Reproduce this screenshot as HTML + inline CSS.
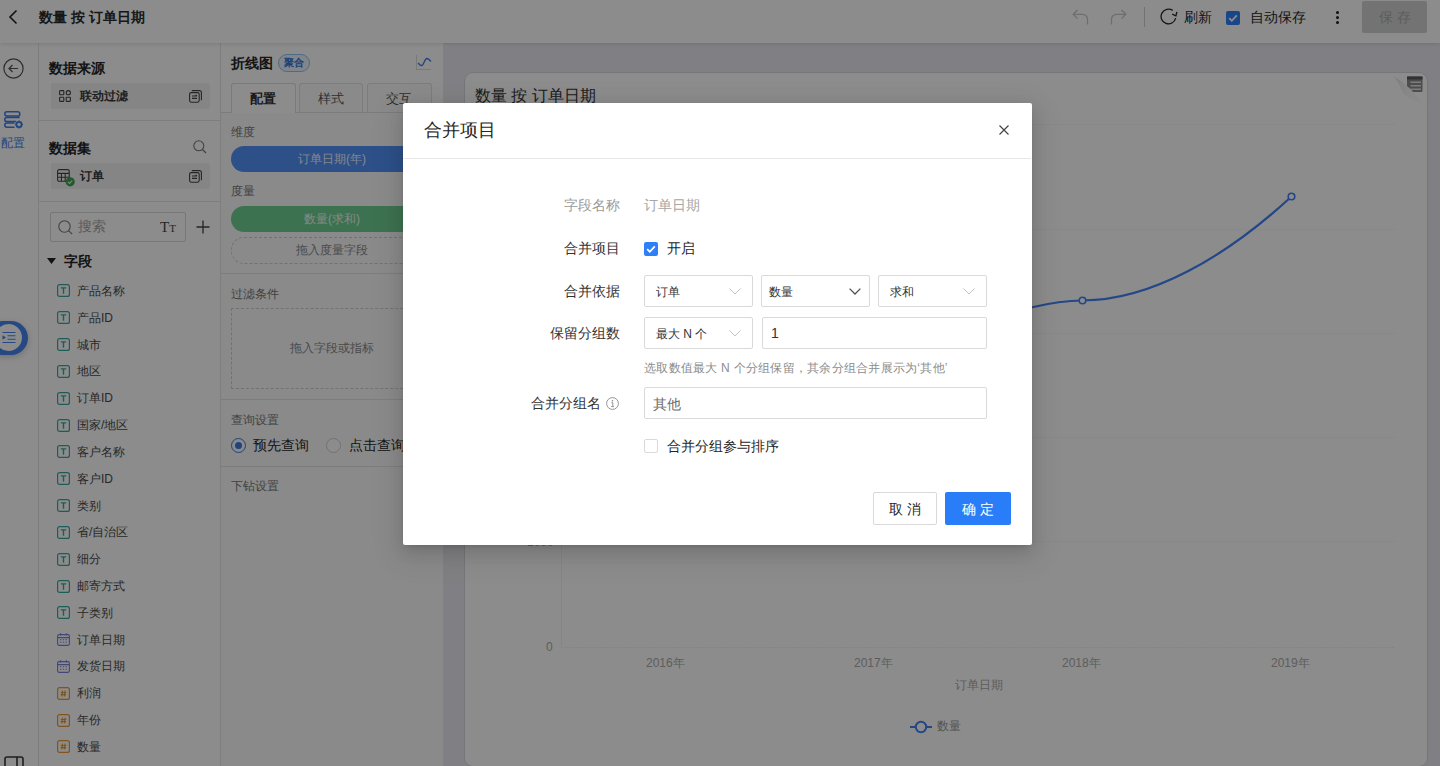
<!DOCTYPE html>
<html><head><meta charset="utf-8">
<style>
*{box-sizing:border-box;margin:0;padding:0}
html,body{width:1440px;height:766px;overflow:hidden;background:#fff;font-family:"Liberation Sans",sans-serif;color:#333}
.a{position:absolute}
.t{position:absolute;white-space:nowrap;line-height:1}
#hdr{left:0;top:0;width:1440px;height:43px;background:#fff;box-shadow:0 1px 4px rgba(0,0,0,.12);z-index:5}
#rail{left:0;top:42px;width:38px;height:724px;background:#fff}
#lp{left:38px;top:42px;width:182px;height:724px;background:#fff}
#mp{left:220px;top:42px;width:224px;height:724px;background:#fff;border-right:1px solid #e8e8e8}
#ca{left:443px;top:42px;width:997px;height:724px;background:#e9eaf0}
#card{left:464px;top:72px;width:964px;height:695px;background:#fff;border-radius:9px;border:1px solid #d6d7dc}
.row{position:absolute;left:13px;width:159px;height:26px;background:#f3f3f3;border-radius:2px}
.fld{position:absolute;left:18px;height:14px;font-size:12px;color:#444}
.fi{position:absolute;left:0;top:0;width:12px;height:12px;border:1.3px solid #2aa198;border-radius:2px;color:#2aa198;font-size:9px;font-weight:bold;text-align:center;line-height:10px}
.sep{position:absolute;height:1px;background:#e6e6e6}
.sm{font-size:12px;color:#888}
#mask{left:0;top:0;width:1440px;height:766px;background:rgba(0,0,0,.45);z-index:50}
#modal{left:403px;top:103px;width:629px;height:442px;background:#fff;z-index:60;border-radius:2px;box-shadow:0 3px 6px -4px rgba(0,0,0,.2),0 6px 16px 0 rgba(0,0,0,.12),0 9px 28px 8px rgba(0,0,0,.07)}
.lbl{position:absolute;font-size:14px;color:#333;text-align:right;width:120px;white-space:nowrap;line-height:1}
.sel{position:absolute;height:32px;border:1px solid #d9d9d9;border-radius:2px;background:#fff;font-size:12px;color:#333}
.sel span{position:absolute;left:11px;top:10px;line-height:1;white-space:nowrap}
.chev{position:absolute;right:12px;top:10px;width:14px;height:10px}
</style></head><body>

<!-- header -->
<div id="hdr" class="a">
  <svg class="a" style="left:7px;top:9px" width="12" height="16" viewBox="0 0 12 16"><path d="M9.5 1.5 L3 8 L9.5 14.5" fill="none" stroke="#222" stroke-width="1.6"/></svg>
  <div class="t" style="left:39px;top:10px;font-size:14px;font-weight:700;color:#2b2b2b">数量 按 订单日期</div>
  <svg class="a" style="left:1072px;top:9px" width="17" height="16" viewBox="0 0 17 16"><path d="M5.5 1L1.2 5.3L5.5 9.6" fill="none" stroke="#c8c8c8" stroke-width="1.3"/><path d="M1.5 5.3H10.5A5 5 0 0 1 15.5 10.3V15.5" fill="none" stroke="#c8c8c8" stroke-width="1.3"/></svg>
  <svg class="a" style="left:1110px;top:9px" width="17" height="16" viewBox="0 0 17 16"><path d="M11.5 1L15.8 5.3L11.5 9.6" fill="none" stroke="#c8c8c8" stroke-width="1.3"/><path d="M15.5 5.3H6.5A5 5 0 0 0 1.5 10.3V15.5" fill="none" stroke="#c8c8c8" stroke-width="1.3"/></svg>
  <div class="a" style="left:1144px;top:7px;width:1px;height:20px;background:#d0d0d0"></div>
  <svg class="a" style="left:1160px;top:8px" width="18" height="18" viewBox="0 0 18 18"><path d="M15.7 10.2A7.4 7.4 0 1 1 12.7 2.4" fill="none" stroke="#2a2a2a" stroke-width="1.3"/><path d="M12.2 6.2L15.9 7.8L16.9 3.9" fill="none" stroke="#2a2a2a" stroke-width="1.4"/></svg>
  <div class="t" style="left:1184px;top:10px;font-size:14px;color:#262626">刷新</div>
  <div class="a" style="left:1226px;top:11px;width:14px;height:14px;background:#2f80f7;border-radius:2px"></div>
  <svg class="a" style="left:1226px;top:11px" width="14" height="14" viewBox="0 0 14 14"><path d="M3.2 7.2L5.8 9.8L10.8 4.4" fill="none" stroke="#fff" stroke-width="1.8"/></svg>
  <div class="t" style="left:1250px;top:10px;font-size:14px;color:#262626">自动保存</div>
  <div class="a" style="left:1335.5px;top:11px;width:3.4px;height:3.4px;border-radius:50%;background:#1e1e1e"></div>
  <div class="a" style="left:1335.5px;top:16px;width:3.4px;height:3.4px;border-radius:50%;background:#1e1e1e"></div>
  <div class="a" style="left:1335.5px;top:21px;width:3.4px;height:3.4px;border-radius:50%;background:#1e1e1e"></div>
  <div class="a" style="left:1362px;top:1px;width:65px;height:32px;background:#d2d2d2;border-radius:2px;font-size:14px;color:#a9a9a9;text-align:center;line-height:33px;letter-spacing:4px;padding-left:4px">保存</div>
</div>

<div id="rail" class="a">
  <svg class="a" style="left:3px;top:16px" width="21" height="21" viewBox="0 0 21 21"><circle cx="10.5" cy="10.5" r="9.6" fill="none" stroke="#555" stroke-width="1.2"/><path d="M9.5 7L6 10.5L9.5 14M6 10.5H15" fill="none" stroke="#555" stroke-width="1.2"/></svg>
  <svg class="a" style="left:4px;top:69px" width="19" height="18" viewBox="0 0 19 18"><g fill="none" stroke="#3f7ee8" stroke-width="1.5"><rect x="0.8" y="0.8" width="15" height="4.2" rx="2.1"/><path d="M12 10.6H2.9A2.1 2.1 0 0 1 2.9 6.4H15.7"/><path d="M10.6 16.2H2.9A2.1 2.1 0 0 1 2.9 12H10.6"/></g><circle cx="15" cy="13.5" r="2.6" fill="none" stroke="#3f7ee8" stroke-width="1.8"/><path d="M15 9.6V10.6M15 16.4V17.4M11.2 13.5H12.2M17.8 13.5H18.8M12.4 10.9L13 11.5M17 15.5L17.6 16.1M12.4 16.1L13 15.5M17 11.5L17.6 10.9" stroke="#3f7ee8" stroke-width="1.5"/></svg>
  <div class="t" style="left:1px;top:95px;font-size:12px;color:#3f7ee8">配置</div>
  <div class="a" style="left:-14px;top:279px;width:42px;height:34px;border-radius:17px;background:#4585f0;box-shadow:0 2px 6px rgba(0,0,0,.2)"></div>
  <div class="a" style="left:-5px;top:282px;width:27px;height:27px;border-radius:50%;background:#fff"></div>
  <svg class="a" style="left:1px;top:289px" width="16" height="14" viewBox="0 0 16 14"><path d="M1.5 1.5H14.5M6.5 4.8H14.5M6.5 8.2H14.5M1.5 11.5H14.5" stroke="#4585f0" stroke-width="1.1"/><path d="M1.5 4.2L5 6.5L1.5 8.8Z" fill="#4585f0"/></svg>
  <svg class="a" style="left:4px;top:714px" width="20" height="14" viewBox="0 0 20 14"><path d="M1 13V3A2 2 0 0 1 3 1H17A2 2 0 0 1 19 3V13M13 1V13" fill="none" stroke="#3a3a3a" stroke-width="1.6"/></svg>
</div>
<div id="lp" class="a">
  <div class="t" style="left:11px;top:19px;font-size:14px;font-weight:700;color:#262626">数据来源</div>
  <div class="row" style="top:41px"></div>
  <svg class="a" style="left:21px;top:48px" width="12" height="12" viewBox="0 0 12 12"><g fill="none" stroke="#444" stroke-width="1.1"><rect x="0.6" y="0.6" width="4.2" height="4.2" rx="0.6"/><rect x="7.2" y="0.6" width="4.2" height="4.2" rx="2.1"/><rect x="0.6" y="7.2" width="4.2" height="4.2" rx="0.6"/><rect x="7.2" y="7.2" width="4.2" height="4.2" rx="0.6"/></g></svg>
  <div class="t" style="left:42px;top:48px;font-size:12px;font-weight:700;color:#3a3a3a">联动过滤</div>
  <svg class="a" style="left:151px;top:48px" width="13" height="13" viewBox="0 0 13 13"><g fill="none" stroke="#444" stroke-width="1.1"><rect x="0.6" y="2.6" width="9.6" height="9.6" rx="1.6"/><path d="M2.8 0.6H10.6A1.8 1.8 0 0 1 12.4 2.4V10.2"/><path d="M3 6H8M3 8.4H8M6.6 4.8L8 6"/></g></svg>
  <div class="a" style="left:0;top:78px;width:182px;height:1px;background:#e3e3e3"></div>
  <div class="t" style="left:11px;top:99px;font-size:14px;font-weight:700;color:#262626">数据集</div>
  <svg class="a" style="left:155px;top:98px" width="14" height="14" viewBox="0 0 14 14"><circle cx="5.8" cy="5.8" r="5" fill="none" stroke="#777" stroke-width="1.1"/><path d="M9.5 9.5L13 13" stroke="#777" stroke-width="1.2"/></svg>
  <div class="row" style="top:121px"></div>
  <svg class="a" style="left:19px;top:127px" width="18" height="18" viewBox="0 0 18 18"><g fill="none" stroke="#444" stroke-width="1.1"><rect x="0.6" y="0.6" width="11.6" height="11.6" rx="1.5"/><path d="M0.6 4.4H12.2M0.6 8.2H12.2M4.4 4.4V12.2M8.2 4.4V12.2"/></g><circle cx="13.2" cy="12.8" r="4.6" fill="#3fa552"/><path d="M11 12.9L12.6 14.4L15.3 11.5" fill="none" stroke="#e8f5ea" stroke-width="1.1"/></svg>
  <div class="t" style="left:42px;top:128px;font-size:12px;font-weight:700;color:#3a3a3a">订单</div>
  <svg class="a" style="left:151px;top:128px" width="13" height="13" viewBox="0 0 13 13"><g fill="none" stroke="#444" stroke-width="1.1"><rect x="0.6" y="2.6" width="9.6" height="9.6" rx="1.6"/><path d="M2.8 0.6H10.6A1.8 1.8 0 0 1 12.4 2.4V10.2"/><path d="M3 6H8M3 8.4H8M6.6 4.8L8 6"/></g></svg>
  <div class="a" style="left:0;top:159px;width:182px;height:1px;background:#e3e3e3"></div>
  <div class="a" style="left:12px;top:170px;width:136px;height:30px;border:1px solid #d9d9d9;border-radius:2px"></div>
  <svg class="a" style="left:20px;top:178px" width="15" height="15" viewBox="0 0 15 15"><circle cx="6.5" cy="6.5" r="5.7" fill="none" stroke="#777" stroke-width="1.1"/><path d="M10.6 10.6L14.2 14.2" stroke="#777" stroke-width="1.2"/></svg>
  <div class="t" style="left:40px;top:177px;font-size:14px;color:#a6a6a6">搜索</div>
  <div class="t" style="left:122px;top:178px;font-family:'Liberation Serif',serif;font-size:15px;color:#444">T<span style="font-size:11px">T</span></div>
  <svg class="a" style="left:158px;top:178px" width="14" height="14" viewBox="0 0 14 14"><path d="M7 0.5V13.5M0.5 7H13.5" stroke="#444" stroke-width="1.3"/></svg>
  <svg class="a" style="left:9px;top:216px" width="9" height="6" viewBox="0 0 9 6"><path d="M0 0H9L4.5 6Z" fill="#222"/></svg>
  <div class="t" style="left:26px;top:212px;font-size:14px;font-weight:700;color:#262626">字段</div>
  <svg class="a" style="left:18.5px;top:242px" width="13" height="13" viewBox="0 0 13 13"><rect x="0.6" y="0.6" width="11.8" height="11.8" rx="2" fill="none" stroke="#3aa89f" stroke-width="1.2"/><path d="M3.8 3.9H9.2M6.5 3.9V9.7" stroke="#3aa89f" stroke-width="1.4" fill="none"/></svg><div class="t" style="left:39px;top:243px;font-size:12px;color:#4a4a4a">产品名称</div>
  <svg class="a" style="left:18.5px;top:269px" width="13" height="13" viewBox="0 0 13 13"><rect x="0.6" y="0.6" width="11.8" height="11.8" rx="2" fill="none" stroke="#3aa89f" stroke-width="1.2"/><path d="M3.8 3.9H9.2M6.5 3.9V9.7" stroke="#3aa89f" stroke-width="1.4" fill="none"/></svg><div class="t" style="left:39px;top:270px;font-size:12px;color:#4a4a4a">产品ID</div>
  <svg class="a" style="left:18.5px;top:296px" width="13" height="13" viewBox="0 0 13 13"><rect x="0.6" y="0.6" width="11.8" height="11.8" rx="2" fill="none" stroke="#3aa89f" stroke-width="1.2"/><path d="M3.8 3.9H9.2M6.5 3.9V9.7" stroke="#3aa89f" stroke-width="1.4" fill="none"/></svg><div class="t" style="left:39px;top:297px;font-size:12px;color:#4a4a4a">城市</div>
  <svg class="a" style="left:18.5px;top:323px" width="13" height="13" viewBox="0 0 13 13"><rect x="0.6" y="0.6" width="11.8" height="11.8" rx="2" fill="none" stroke="#3aa89f" stroke-width="1.2"/><path d="M3.8 3.9H9.2M6.5 3.9V9.7" stroke="#3aa89f" stroke-width="1.4" fill="none"/></svg><div class="t" style="left:39px;top:323px;font-size:12px;color:#4a4a4a">地区</div>
  <svg class="a" style="left:18.5px;top:350px" width="13" height="13" viewBox="0 0 13 13"><rect x="0.6" y="0.6" width="11.8" height="11.8" rx="2" fill="none" stroke="#3aa89f" stroke-width="1.2"/><path d="M3.8 3.9H9.2M6.5 3.9V9.7" stroke="#3aa89f" stroke-width="1.4" fill="none"/></svg><div class="t" style="left:39px;top:350px;font-size:12px;color:#4a4a4a">订单ID</div>
  <svg class="a" style="left:18.5px;top:377px" width="13" height="13" viewBox="0 0 13 13"><rect x="0.6" y="0.6" width="11.8" height="11.8" rx="2" fill="none" stroke="#3aa89f" stroke-width="1.2"/><path d="M3.8 3.9H9.2M6.5 3.9V9.7" stroke="#3aa89f" stroke-width="1.4" fill="none"/></svg><div class="t" style="left:39px;top:377px;font-size:12px;color:#4a4a4a">国家/地区</div>
  <svg class="a" style="left:18.5px;top:403px" width="13" height="13" viewBox="0 0 13 13"><rect x="0.6" y="0.6" width="11.8" height="11.8" rx="2" fill="none" stroke="#3aa89f" stroke-width="1.2"/><path d="M3.8 3.9H9.2M6.5 3.9V9.7" stroke="#3aa89f" stroke-width="1.4" fill="none"/></svg><div class="t" style="left:39px;top:404px;font-size:12px;color:#4a4a4a">客户名称</div>
  <svg class="a" style="left:18.5px;top:430px" width="13" height="13" viewBox="0 0 13 13"><rect x="0.6" y="0.6" width="11.8" height="11.8" rx="2" fill="none" stroke="#3aa89f" stroke-width="1.2"/><path d="M3.8 3.9H9.2M6.5 3.9V9.7" stroke="#3aa89f" stroke-width="1.4" fill="none"/></svg><div class="t" style="left:39px;top:431px;font-size:12px;color:#4a4a4a">客户ID</div>
  <svg class="a" style="left:18.5px;top:457px" width="13" height="13" viewBox="0 0 13 13"><rect x="0.6" y="0.6" width="11.8" height="11.8" rx="2" fill="none" stroke="#3aa89f" stroke-width="1.2"/><path d="M3.8 3.9H9.2M6.5 3.9V9.7" stroke="#3aa89f" stroke-width="1.4" fill="none"/></svg><div class="t" style="left:39px;top:458px;font-size:12px;color:#4a4a4a">类别</div>
  <svg class="a" style="left:18.5px;top:484px" width="13" height="13" viewBox="0 0 13 13"><rect x="0.6" y="0.6" width="11.8" height="11.8" rx="2" fill="none" stroke="#3aa89f" stroke-width="1.2"/><path d="M3.8 3.9H9.2M6.5 3.9V9.7" stroke="#3aa89f" stroke-width="1.4" fill="none"/></svg><div class="t" style="left:39px;top:484px;font-size:12px;color:#4a4a4a">省/自治区</div>
  <svg class="a" style="left:18.5px;top:511px" width="13" height="13" viewBox="0 0 13 13"><rect x="0.6" y="0.6" width="11.8" height="11.8" rx="2" fill="none" stroke="#3aa89f" stroke-width="1.2"/><path d="M3.8 3.9H9.2M6.5 3.9V9.7" stroke="#3aa89f" stroke-width="1.4" fill="none"/></svg><div class="t" style="left:39px;top:511px;font-size:12px;color:#4a4a4a">细分</div>
  <svg class="a" style="left:18.5px;top:538px" width="13" height="13" viewBox="0 0 13 13"><rect x="0.6" y="0.6" width="11.8" height="11.8" rx="2" fill="none" stroke="#3aa89f" stroke-width="1.2"/><path d="M3.8 3.9H9.2M6.5 3.9V9.7" stroke="#3aa89f" stroke-width="1.4" fill="none"/></svg><div class="t" style="left:39px;top:538px;font-size:12px;color:#4a4a4a">邮寄方式</div>
  <svg class="a" style="left:18.5px;top:564px" width="13" height="13" viewBox="0 0 13 13"><rect x="0.6" y="0.6" width="11.8" height="11.8" rx="2" fill="none" stroke="#3aa89f" stroke-width="1.2"/><path d="M3.8 3.9H9.2M6.5 3.9V9.7" stroke="#3aa89f" stroke-width="1.4" fill="none"/></svg><div class="t" style="left:39px;top:565px;font-size:12px;color:#4a4a4a">子类别</div>
  <svg class="a" style="left:18.5px;top:591px" width="13" height="13" viewBox="0 0 13 13"><rect x="0.6" y="1.6" width="11.8" height="10.8" rx="1.6" fill="none" stroke="#7a82d6" stroke-width="1.1"/><path d="M0.6 4.6H12.4M3.6 0.3V2.6M9.4 0.3V2.6" stroke="#7a82d6" stroke-width="1.1"/><path d="M3 6.8h1.4M5.8 6.8h1.4M8.6 6.8h1.4M3 9.2h1.4M5.8 9.2h1.4M8.6 9.2h1.4" stroke="#7a82d6" stroke-width="1.1"/></svg><div class="t" style="left:39px;top:592px;font-size:12px;color:#4a4a4a">订单日期</div>
  <svg class="a" style="left:18.5px;top:618px" width="13" height="13" viewBox="0 0 13 13"><rect x="0.6" y="1.6" width="11.8" height="10.8" rx="1.6" fill="none" stroke="#7a82d6" stroke-width="1.1"/><path d="M0.6 4.6H12.4M3.6 0.3V2.6M9.4 0.3V2.6" stroke="#7a82d6" stroke-width="1.1"/><path d="M3 6.8h1.4M5.8 6.8h1.4M8.6 6.8h1.4M3 9.2h1.4M5.8 9.2h1.4M8.6 9.2h1.4" stroke="#7a82d6" stroke-width="1.1"/></svg><div class="t" style="left:39px;top:618px;font-size:12px;color:#4a4a4a">发货日期</div>
  <svg class="a" style="left:18.5px;top:645px" width="13" height="13" viewBox="0 0 13 13"><rect x="0.6" y="0.6" width="11.8" height="11.8" rx="2" fill="none" stroke="#e89a35" stroke-width="1.2"/><path d="M5.5 3.6L4.9 9.4M8.1 3.6L7.5 9.4M3.8 5.5H9.3M3.6 7.6H9.1" stroke="#e89a35" stroke-width="1.2" fill="none"/></svg><div class="t" style="left:39px;top:645px;font-size:12px;color:#4a4a4a">利润</div>
  <svg class="a" style="left:18.5px;top:672px" width="13" height="13" viewBox="0 0 13 13"><rect x="0.6" y="0.6" width="11.8" height="11.8" rx="2" fill="none" stroke="#e89a35" stroke-width="1.2"/><path d="M5.5 3.6L4.9 9.4M8.1 3.6L7.5 9.4M3.8 5.5H9.3M3.6 7.6H9.1" stroke="#e89a35" stroke-width="1.2" fill="none"/></svg><div class="t" style="left:39px;top:672px;font-size:12px;color:#4a4a4a">年份</div>
  <svg class="a" style="left:18.5px;top:698px" width="13" height="13" viewBox="0 0 13 13"><rect x="0.6" y="0.6" width="11.8" height="11.8" rx="2" fill="none" stroke="#e89a35" stroke-width="1.2"/><path d="M5.5 3.6L4.9 9.4M8.1 3.6L7.5 9.4M3.8 5.5H9.3M3.6 7.6H9.1" stroke="#e89a35" stroke-width="1.2" fill="none"/></svg><div class="t" style="left:39px;top:699px;font-size:12px;color:#4a4a4a">数量</div>
</div>
<div id="mp" class="a">
  <div class="t" style="left:11px;top:14px;font-size:14px;font-weight:700;color:#262626">折线图</div>
  <div class="a" style="left:58px;top:12px;width:32px;height:18px;border:1px solid #91c3f0;border-radius:9px;background:#eaf4fd;font-size:10px;font-weight:700;color:#3576d8;text-align:center;line-height:16px">聚合</div>
  <div class="a" style="left:196px;top:13px;width:15px;height:15px;border-left:1px solid #ddd;border-bottom:1px solid #ddd"></div>
  <svg class="a" style="left:197px;top:14px" width="15" height="12" viewBox="0 0 15 12"><path d="M1 7C2.5 8.5 3.5 10 5 9.5C6.5 9 7.5 3.5 9.5 2.5C11 2 12.5 4 14 5.5" fill="none" stroke="#3f7ee8" stroke-width="1.4"/></svg>
  <div class="a" style="left:0;top:70px;width:223px;height:654px;background:#fbfbfb;border-top:1px solid #e0e0e0"></div>
  <div class="a" style="left:11px;top:41px;width:65px;height:30px;background:#fff;border:1px solid #dedede;border-bottom:none;border-radius:3px 3px 0 0"></div>
  <div class="a" style="left:79px;top:41px;width:64px;height:29px;background:#fbfbfb;border:1px solid #e2e2e2;border-bottom:none;border-radius:3px 3px 0 0"></div>
  <div class="a" style="left:147px;top:41px;width:65px;height:29px;background:#fbfbfb;border:1px solid #e2e2e2;border-bottom:none;border-radius:3px 3px 0 0"></div>
  <div class="t" style="left:30px;top:50px;font-size:13px;font-weight:700;color:#333">配置</div>
  <div class="t" style="left:98px;top:50px;font-size:13px;color:#555">样式</div>
  <div class="t" style="left:166px;top:50px;font-size:13px;color:#555">交互</div>
  <div class="t" style="left:11px;top:84px;font-size:12px;color:#777">维度</div>
  <div class="a" style="left:11px;top:104px;width:202px;height:26px;border-radius:13px;background:#5293f9;color:#eef4ff;font-size:12px;text-align:center;line-height:26px">订单日期(年)</div>
  <div class="t" style="left:11px;top:143px;font-size:12px;color:#777">度量</div>
  <div class="a" style="left:11px;top:164px;width:202px;height:26px;border-radius:13px;background:#6fcf92;color:#eefaf2;font-size:12px;text-align:center;line-height:26px">数量(求和)</div>
  <div class="a" style="left:11px;top:195px;width:202px;height:27px;border-radius:13px;border:1px dashed #cfcfcf;color:#888;font-size:12px;text-align:center;line-height:25px">拖入度量字段</div>
  <div class="a" style="left:0;top:231px;width:223px;height:1px;background:#e3e3e3"></div>
  <div class="t" style="left:11px;top:246px;font-size:12px;color:#777">过滤条件</div>
  <div class="a" style="left:11px;top:266px;width:202px;height:81px;border:1px dashed #cfcfcf;color:#888;font-size:12px;text-align:center;line-height:79px">拖入字段或指标</div>
  <div class="a" style="left:0;top:357px;width:223px;height:1px;background:#e3e3e3"></div>
  <div class="t" style="left:11px;top:372px;font-size:12px;color:#777">查询设置</div>
  <div class="a" style="left:11px;top:396px;width:15px;height:15px;border:1px solid #3b7be0;border-radius:50%"></div>
  <div class="a" style="left:15px;top:400px;width:7px;height:7px;background:#3b7be0;border-radius:50%"></div>
  <div class="t" style="left:33px;top:396px;font-size:14px;color:#262626">预先查询</div>
  <div class="a" style="left:106px;top:396px;width:15px;height:15px;border:1px solid #d0d0d0;border-radius:50%;background:#fff"></div>
  <div class="t" style="left:129px;top:396px;font-size:14px;color:#262626">点击查询</div>
  <div class="a" style="left:0;top:424px;width:223px;height:1px;background:#e3e3e3"></div>
  <div class="t" style="left:11px;top:438px;font-size:12px;color:#777">下钻设置</div>
</div>
<div id="ca" class="a"></div>
<div id="card" class="a"></div>
<div class="t" style="left:475px;top:88px;font-size:16px;color:#333">数量 按 订单日期</div>
<svg class="a" style="left:1388px;top:73px" width="40" height="40" viewBox="0 0 40 40">
  <rect x="19" y="3.5" width="15.5" height="15.5" rx="1" fill="#8c8c8c"/>
  <rect x="19" y="3.5" width="15.5" height="3" fill="#5a5a5a"/>
  <path d="M22.5 9.3H33M22.5 12.8H33M22.5 16.3H33" stroke="#e4e4e4" stroke-width="1.6"/>
  <defs><linearGradient id="cg" x1="0" y1="0" x2="1" y2="0.3"><stop offset="0" stop-color="#e2e2e2"/><stop offset="0.5" stop-color="#f6f6f6"/><stop offset="1" stop-color="#fdfdfd"/></linearGradient></defs>
  <path d="M5 3C11 8 13 16 15 20C19 25 31 28 39 37C36 30 32 25 27 21C22 15 14 8 5 3Z" fill="url(#cg)"/>
</svg>
<svg class="a" style="left:464px;top:72px" width="964" height="694" viewBox="464 72 964 694">
  <g stroke="#f8f8f8" stroke-width="1">
    <path d="M561 124.5H1395M561 229.5H1395M561 333.5H1395M561 437.5H1395M561 541.5H1395"/>
  </g>
  <path d="M561.5 124V647" stroke="#f2f2f2" stroke-width="1"/>
  <path d="M561 647.5H1395" stroke="#f0f0f0" stroke-width="1" stroke-dasharray="2 1"/>
  <path d="M1031 307.5C1050 303 1066 300.5 1082.5 300.5C1150 300.5 1225 258 1291.5 196.5" fill="none" stroke="#4282f6" stroke-width="2.2"/>
  <circle cx="1082.5" cy="300.5" r="3.3" fill="#fff" stroke="#4282f6" stroke-width="1.6"/>
  <circle cx="1291.5" cy="196.5" r="3.3" fill="#fff" stroke="#4282f6" stroke-width="1.6"/>
  <path d="M910 727H932" stroke="#4282f6" stroke-width="2"/>
  <circle cx="921" cy="727" r="5.2" fill="#fff" stroke="#4282f6" stroke-width="2"/>
</svg>
<div class="t" style="left:546px;top:641px;font-size:12px;color:#aaa">0</div>
<div class="t" style="left:527px;top:536px;font-size:12px;color:#aaa">1000</div>
<div class="t" style="left:646px;top:657px;font-size:12px;color:#aaa">2016年</div>
<div class="t" style="left:854px;top:657px;font-size:12px;color:#aaa">2017年</div>
<div class="t" style="left:1062px;top:657px;font-size:12px;color:#aaa">2018年</div>
<div class="t" style="left:1271px;top:657px;font-size:12px;color:#aaa">2019年</div>
<div class="t" style="left:955px;top:679px;font-size:12px;color:#aaa">订单日期</div>
<div class="t" style="left:937px;top:720px;font-size:12px;color:#999">数量</div>

<div class="a" style="left:38px;top:42px;width:1px;height:724px;background:#e6e6e6"></div>
<div class="a" style="left:220px;top:42px;width:1px;height:724px;background:#e6e6e6"></div>
<div id="mask" class="a"></div>

<div id="modal" class="a">
  <div class="t" style="left:21px;top:18px;font-size:18px;color:#262626">合并项目</div>
  <svg class="a" style="left:596px;top:22px" width="10" height="10" viewBox="0 0 10 10"><path d="M0.5 0.5L9.5 9.5M9.5 0.5L0.5 9.5" stroke="#444" stroke-width="1.2"/></svg>
  <div class="a" style="left:0;top:55px;width:628px;height:1px;background:#e8e8e8"></div>
  <div class="lbl" style="left:97px;top:95px;color:#9a9a9a">字段名称</div>
  <div class="t" style="left:241px;top:95px;font-size:14px;color:#a6a6a6">订单日期</div>
  <div class="lbl" style="left:97px;top:138px">合并项目</div>
  <div class="a" style="left:241px;top:139px;width:14px;height:14px;background:#2f80f7;border-radius:2px"></div>
  <svg class="a" style="left:241px;top:139px" width="14" height="14" viewBox="0 0 14 14"><path d="M3.2 7.2L5.8 9.8L10.8 4.4" fill="none" stroke="#fff" stroke-width="1.8"/></svg>
  <div class="t" style="left:264px;top:138px;font-size:14px;color:#262626">开启</div>
  <div class="lbl" style="left:97px;top:181px">合并依据</div>
  <div class="sel" style="left:241px;top:172px;width:109px"><span>订单</span></div>
  <svg class="a" style="left:326px;top:185px" width="12" height="7" viewBox="0 0 12 7"><path d="M0.5 0.5L6 6L11.5 0.5" fill="none" stroke="#c4c4c4" stroke-width="1"/></svg>
  <div class="sel" style="left:358px;top:172px;width:109px"><span style="left:7px">数量</span></div>
  <svg class="a" style="left:446px;top:185px" width="12" height="7" viewBox="0 0 12 7"><path d="M0.6 0.6L6 6L11.4 0.6" fill="none" stroke="#505050" stroke-width="1.3"/></svg>
  <div class="sel" style="left:475px;top:172px;width:109px"><span>求和</span></div>
  <svg class="a" style="left:560px;top:185px" width="12" height="7" viewBox="0 0 12 7"><path d="M0.5 0.5L6 6L11.5 0.5" fill="none" stroke="#c4c4c4" stroke-width="1"/></svg>
  <div class="lbl" style="left:97px;top:223px">保留分组数</div>
  <div class="sel" style="left:241px;top:214px;width:109px"><span>最大 N 个</span></div>
  <svg class="a" style="left:326px;top:227px" width="12" height="7" viewBox="0 0 12 7"><path d="M0.5 0.5L6 6L11.5 0.5" fill="none" stroke="#c4c4c4" stroke-width="1"/></svg>
  <div class="sel" style="left:359px;top:214px;width:225px"><span style="font-size:14px;top:8px;left:8px">1</span></div>
  <div class="t" style="left:241px;top:259px;font-size:12px;letter-spacing:0.25px;color:#8c8c8c">选取数值最大 N 个分组保留，其余分组合并展示为‘其他’</div>
  <div class="lbl" style="left:78px;top:293px">合并分组名</div>
  <svg class="a" style="left:203px;top:294px" width="13" height="13" viewBox="0 0 13 13"><circle cx="6.5" cy="6.5" r="5.9" fill="none" stroke="#888" stroke-width="0.9"/><circle cx="6.5" cy="3.8" r="0.8" fill="#888"/><path d="M5.4 5.6H6.8V9.6M5.2 9.6H7.9" fill="none" stroke="#888" stroke-width="0.9"/></svg>
  <div class="sel" style="left:241px;top:284px;width:343px"><span style="font-size:14px;top:9px;left:8px;color:#6a6a6a">其他</span></div>
  <div class="a" style="left:241px;top:336px;width:14px;height:14px;border:1px solid #d9d9d9;border-radius:2px;background:#fff"></div>
  <div class="t" style="left:264px;top:336px;font-size:14px;color:#262626">合并分组参与排序</div>
  <div class="a" style="left:470px;top:389px;width:64px;height:33px;border:1px solid #d9d9d9;border-radius:2px;background:#fff;font-size:14px;color:#262626;text-align:center;line-height:33px;letter-spacing:4px;padding-left:4px">取消</div>
  <div class="a" style="left:542px;top:389px;width:66px;height:33px;border-radius:2px;background:#1f7cf7;font-size:14px;color:#fff;text-align:center;line-height:35px;letter-spacing:4px;padding-left:4px;background:#2a7df8">确定</div>
</div>
</body></html>
